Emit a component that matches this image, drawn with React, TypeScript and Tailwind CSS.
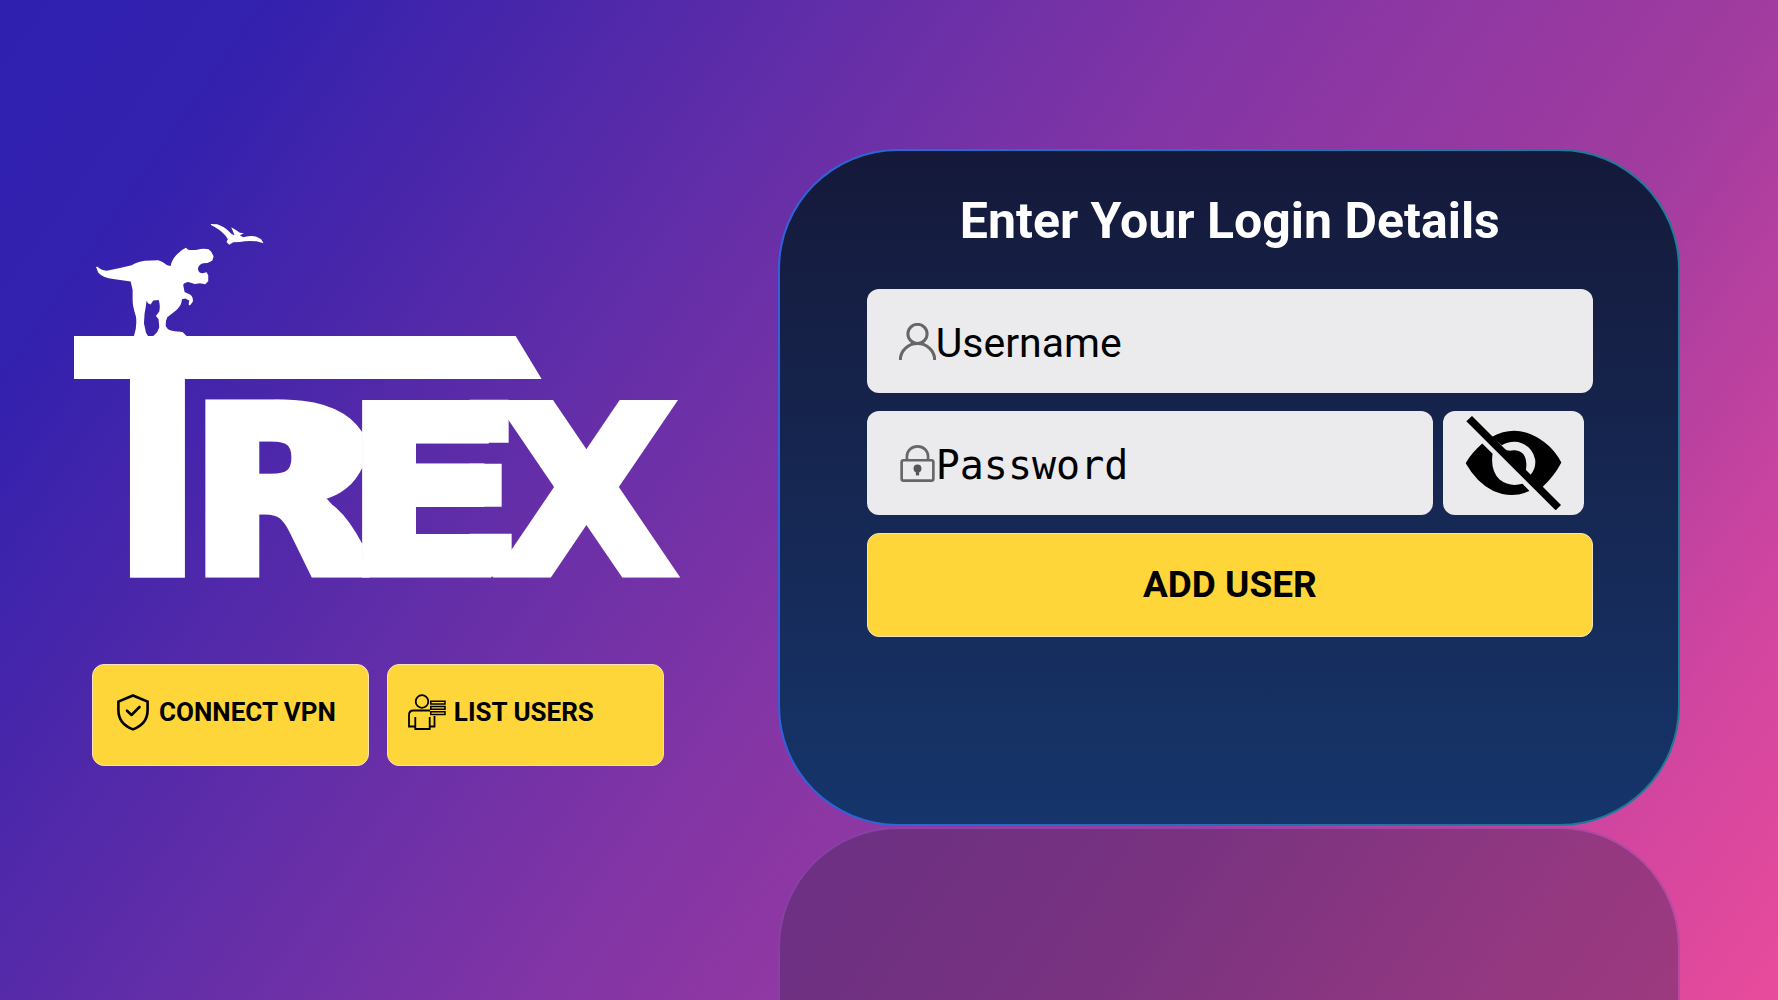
import React from 'react';

const TrexLogo = () => (
  <svg viewBox="74 223 608 355" className="w-[80.4%] h-auto overflow-visible" fill="#fff" role="img" aria-label="TREX">
    <g transform="translate(60 210) scale(.33333)">
      <path d="M108 171L113 170Q122 180 140 182L180 174L215 166Q230 155 255 152L295 151Q312 156 322 166L332 168Q336 148 350 134L366 120L378 113L385 119Q400 121 412 119Q430 114 446 118Q458 126 461 140L457 152Q445 160 430 160Q416 164 414 176Q416 190 428 190L440 187L445 196L445 214L436 223L420 220L405 222L385 216Q370 218 370 226L374 246L390 254Q400 260 399 275L390 287L386 284L388 272L376 266L366 268Q366 285 350 300L322 322Q316 335 318 350Q326 364 345 364L368 366L380 378L280 378L292 366L298 352L296 328L288 318L298 305Q302 285 296 270L280 272L272 284L264 280L260 272Q258 290 254 310L252 340L258 368L264 378L222 378Q232 350 228 320Q218 290 218 270L218 240L212 215L160 207Q130 204 115 188Z" />
      <path d="M453 42L472 43Q495 52 505 62Q515 74 524 76L514 52L528 60L540 68L552 70L540 76L550 82Q575 76 590 80L604 88L611 100L590 94Q560 92 540 96L520 97L508 104L500 96L504 88L496 76Q480 58 453 45Z" />
    </g>
    <path d="M74 336H516L542 379H74Z" />
    <rect x="130" y="370" width="55" height="208" />
    <text x="190 347 499" y="572" fontFamily="DejaVu Sans" fontWeight="700" fontSize="228" stroke="#fff" strokeWidth="11">REX</text>
    {/* joins between the letters */}
    <path d="M275 400H290Q343 402 363 433V467Q351 493 323 500Q343 507 363 545V577H340L305 500L325 440Z" />
    <path d="M470 400H509V443H470ZM470 464H502V507H470ZM470 534H512V577H470Z" />
  </svg>
);

const ShieldIcon = () => (
  <svg viewBox="0 0 32 37" className="w-8 shrink-0" fill="none" stroke="currentColor" strokeWidth="2.6" aria-hidden="true">
    <path d="M16 1.5L30.6 7.6V16C30.6 25 25 32 16 35.4C7 32 1.4 25 1.4 16V7.6Z" />
    <path d="M10 16.7L14.5 21L22.5 13" strokeLinecap="round" strokeLinejoin="round" />
  </svg>
);

const ListUsersIcon = () => (
  <svg viewBox="0 0 38 37" className="w-[38px] shrink-0" fill="none" stroke="currentColor" strokeWidth="1.8" aria-hidden="true">
    <circle cx="14" cy="7.5" r="6.3" />
    <path d="M7 32.5H1V21Q1 16.5 5.5 16.5H22M26.5 22V32.5H21" />
    <path d="M7.3 23V35H21.7V23" />
    <path d="M22.8 7.3H37V10H22.8ZM22.8 12.5H37V15.2H22.8ZM22.8 17.7H37V20.4H22.8Z" strokeWidth="1.5" />
  </svg>
);

const UserIcon = () => (
  <svg viewBox="0 0 112 112" className="w-[37px] shrink-0" fill="none" stroke="#666" strokeWidth="9" aria-hidden="true">
    <circle cx="56" cy="33" r="29" />
    <path d="M4 112A52 50 0 0 1 108 112" />
  </svg>
);

const LockIcon = () => (
  <svg viewBox="-5 0 112 112" className="w-[37px] shrink-0" fill="none" stroke="#666" strokeWidth="8" aria-hidden="true">
    <rect x="3" y="46" width="96" height="62" rx="6" />
    <path d="M19 46V34A32 30 0 0 1 83 34V46" />
    <circle cx="51" cy="71" r="12" fill="#555" stroke="none" />
    <path d="M51 74V92" stroke="#555" strokeWidth="10" />
  </svg>
);

const EyeOffIcon = () => (
  <svg viewBox="190 75 292 284" className="w-[97px]" fill="#000" aria-hidden="true">
    <path d="M242 158L273 189Q266 240 294 266Q325 290 363 279L384 301Q330 325 274 300Q225 275 192 217Q208 188 242 158Z" />
    <path d="M270 138Q330 105 388 130Q450 157 480 215Q460 255 422 290L387 253Q405 230 401 205Q393 165 350 153Q320 150 301 163Z" />
    <path d="M310 174Q318 181 330 179Q352 176 366 190Q380 210 372 242Z" />
    <path d="M194 91L211 75L479 343L463 359Z" />
  </svg>
);

const actions = [
  { icon: ShieldIcon, label: 'CONNECT VPN', spacing: 'pl-6 gap-2.5' },
  { icon: ListUsersIcon, label: 'LIST USERS', spacing: 'pl-5 gap-2' },
];

const App = () => {
  return (
    <main className="flex h-screen overflow-hidden bg-[linear-gradient(125deg,#2f20b0_0%,#3321ae_11%,#4b27aa_23%,#642ea8_35%,#8435a5_51%,#a23c9f_72%,#d045a0_88%,#e84b9b_100%)] font-[Roboto,sans-serif] text-black">
      <section className="w-[42.5%] shrink-0 flex flex-col items-center pt-[223px]">
        <TrexLogo />
        <div className="mt-[86px] w-full px-[92px] grid grid-cols-2 gap-[18px]">
          {actions.map((action) => (
            <button key={action.label} type="button" className={`flex items-center h-[102px] pb-1 rounded-xl border border-[#f5e3bd] bg-[#ffd63a] text-[26px] font-bold whitespace-nowrap ${action.spacing}`}>
              <action.icon />
              {action.label}
            </button>
          ))}
        </div>
      </section>

      <section className="flex-1 min-w-0 pl-[22px] pr-[98px] pt-[149px]">
        <div className="rounded-[120px] p-[2px] bg-linear-to-r from-[#2f62dc] to-[#1b7c92]">
          <form className="h-[673px] rounded-[118px] bg-linear-to-b from-[#14193a] to-[#15356b] pl-[87px] pr-[85px] pt-9 flex flex-col" onSubmit={(e) => e.preventDefault()}>
            <h1 className="h-[102px] text-center text-[50px] leading-[68px] font-bold text-white whitespace-nowrap">Enter Your Login Details</h1>

            <div className="flex flex-col gap-[18px]">
              <label className="flex items-center h-[104px] pl-8 rounded-xl bg-[#ebebed]">
                <UserIcon />
                <input type="text" aria-label="Username" placeholder="Username" className="flex-1 min-w-0 h-full pt-1 outline-none text-[41px] placeholder:text-black" />
              </label>

              <div className="flex gap-2.5 pr-[9px]">
                <label className="flex-1 min-w-0 flex items-center h-[104px] pl-8 rounded-xl bg-[#ebebed]">
                  <LockIcon />
                  <input type="password" aria-label="Password" placeholder="Password" className="flex-1 min-w-0 h-full pt-1 outline-none font-['DejaVu_Sans_Mono',monospace] text-[40px] placeholder:text-black" />
                </label>
                <button type="button" aria-label="Show password" className="w-[141px] h-[104px] flex items-center justify-center rounded-xl bg-[#ebebed]">
                  <EyeOffIcon />
                </button>
              </div>

              <button type="submit" className="h-[104px] rounded-xl border border-[#f5e3bd] bg-[#ffd63a] text-[37px] font-bold">ADD USER</button>
            </div>
          </form>
        </div>
        {/* mirrored lower edge of the card */}
        <div className="mt-px h-[677px] rounded-[120px] border-2 border-[#7d50a8]/40 bg-[#402655]/42 bg-clip-padding" />
      </section>
    </main>
  );
};

export default App;
